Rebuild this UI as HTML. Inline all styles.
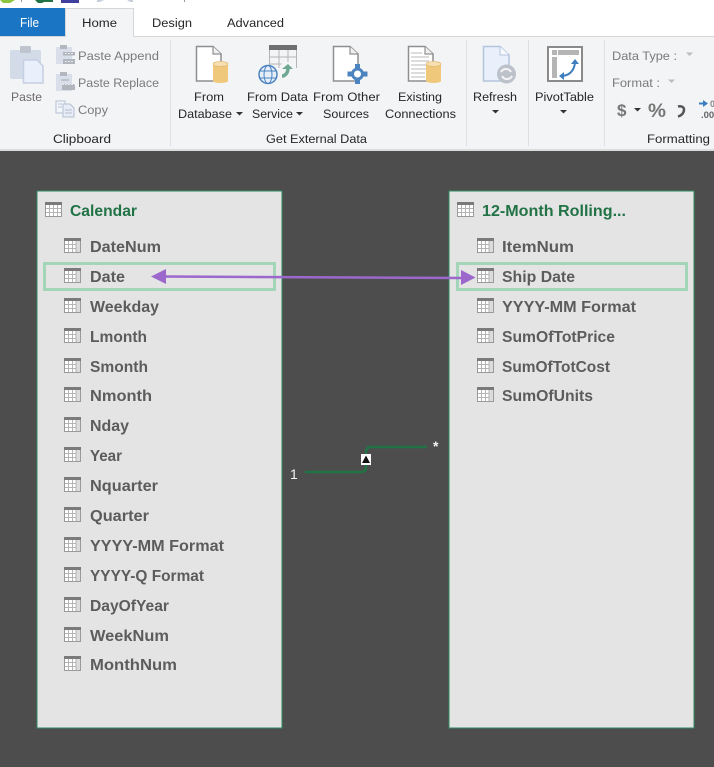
<!DOCTYPE html>
<html><head><meta charset="utf-8"><style>
html,body{margin:0;padding:0;width:714px;height:767px;overflow:hidden;background:#4d4d4d}
svg{display:block}
text{font-family:"Liberation Sans",sans-serif}
.r{font-size:12.3px;fill:#262626}
.g{font-size:12.3px;fill:#7a7a7a}
.f{font-size:15.5px;font-weight:bold;fill:#5c5c5c}
.h{font-size:15.5px;font-weight:bold;fill:#217346}
</style></head><body>
<svg width="714" height="767" viewBox="0 0 714 767" xmlns="http://www.w3.org/2000/svg">
<defs>
<g id="fi">
<rect x="0.500" y="0.500" width="16" height="14" fill="#fff" stroke="#9a9a9a" stroke-width="1"/>
<rect x="0" y="0" width="17" height="3" fill="#7a7a7a"/>
<rect x="12" y="3" width="4" height="11" fill="#dcdcdc"/>
<path d="M1 6.500h11M1 10.500h11M4.500 3v11M8.500 3v11M12 3v11" stroke="#b4b4b4" stroke-width="1" fill="none"/>
</g>
<g id="ti">
<rect x="0.500" y="0.500" width="16" height="14" fill="#fff" stroke="#9a9a9a" stroke-width="1"/>
<rect x="0" y="0" width="17" height="3" fill="#7a7a7a"/>
<path d="M1 6.500h15M1 10.500h15M4.500 3v11M8.500 3v11M12.500 3v11" stroke="#b4b4b4" stroke-width="1" fill="none"/>
</g>
<g id="doc">
<path d="M.5.5H17L25 8V35H.5Z" fill="#fff" stroke="#8f8f8f" stroke-width="1.5"/>
<path d="M17 .5V8H25" fill="#f0f0f0" stroke="#8f8f8f" stroke-width="1.2"/>
</g>
<g id="cyl">
<rect x="0" y="3" width="15" height="17" fill="#efc87c"/>
<ellipse cx="7.500" cy="20" rx="7.500" ry="2" fill="#efc87c"/>
<ellipse cx="7.500" cy="3" rx="7.500" ry="2.500" fill="#f6dfb0" stroke="#e2bb70" stroke-width=".7"/>
</g>
</defs>

<rect x="0" y="0" width="714" height="37" fill="#fff"/>
<rect x="0" y="37" width="714" height="113" fill="#f3f4f6"/>
<rect x="0" y="36" width="714" height="1" fill="#d6d6d6"/>
<rect x="0" y="149" width="714" height="2" fill="#dcdcdc"/>
<rect x="0" y="151" width="714" height="616" fill="#4d4d4d"/>

<!-- top strip -->
<path d="M0 0H15L10 3H3Z" fill="#8cc63f"/>
<rect x="21" y="0" width="1" height="2" fill="#999"/>
<path d="M35 0H53V2H44L42 3H38Z" fill="#217346"/>
<rect x="61" y="0" width="18" height="3" fill="#3f3f9f"/>
<path d="M97 0H104L100 2H97ZM127 0H133V2H130Z" fill="#c8cedb"/>
<rect x="184" y="0" width="1" height="2" fill="#999"/>

<!-- tabs -->
<rect x="0" y="8" width="65" height="28" fill="#1a75c4"/>
<text x="20" y="27" font-size="13" fill="#fff" textLength="19" lengthAdjust="spacingAndGlyphs">File</text>
<path d="M65.500 37V8.500H133.500V37" fill="#f3f4f6" stroke="#d6d6d6"/>
<rect x="66" y="35" width="67" height="3" fill="#f3f4f6"/>
<text x="82" y="27" class="r" textLength="35" lengthAdjust="spacingAndGlyphs">Home</text>
<text x="152" y="27" class="r" textLength="40" lengthAdjust="spacingAndGlyphs">Design</text>
<text x="227" y="27" class="r" textLength="57" lengthAdjust="spacingAndGlyphs">Advanced</text>

<!-- separators -->
<path d="M170.500 40V146M466.500 40V146M528.500 40V146M604.500 40V146" stroke="#dcdfe3" stroke-width="1"/>

<!-- paste -->
<rect x="10" y="50" width="31" height="29" rx="2" fill="#d3dbe9"/>
<rect x="20" y="46" width="11" height="7" rx="1" fill="#bfc5cf"/>
<path d="M23.500 60H37L43 66V83H23.500Z" fill="#eaf0fb" stroke="#c4cfe2" stroke-width="1.500"/>
<text x="11" y="101" class="g" textLength="31" lengthAdjust="spacingAndGlyphs" style="fill:#6f6a6a">Paste</text>
<!-- paste append -->
<rect x="56" y="47" width="16" height="17" fill="#d8deea"/>
<rect x="60" y="45" width="7" height="4" fill="#b2b7c0"/>
<rect x="63" y="52" width="12" height="3.500" fill="#b0b5be"/>
<rect x="63" y="59" width="12" height="5" fill="#b0b5be"/>
<path d="M65 53.500h8M65 61.500h8" stroke="#e8e8e8" stroke-dasharray="2 1"/>
<text x="78" y="60" class="g" textLength="81" lengthAdjust="spacingAndGlyphs">Paste Append</text>
<!-- paste replace -->
<rect x="56" y="74" width="16" height="17" fill="#d8deea"/>
<rect x="60" y="72" width="7" height="4" fill="#b2b7c0"/>
<rect x="62" y="84" width="13" height="6" fill="#b0b5be"/>
<path d="M62 84.500h13" stroke="#e8e8e8" stroke-dasharray="2 1"/>
<path d="M61 80h8" stroke="#a2a7b0"/>
<text x="78" y="87" class="g" textLength="81" lengthAdjust="spacingAndGlyphs">Paste Replace</text>
<!-- copy -->
<path d="M56 101H65V113H56Z" fill="#f3f6fb" stroke="#b4bfd2"/>
<path d="M63 104H70L74 108V117H63Z" fill="#e7edf7" stroke="#b4bfd2"/>
<path d="M65 110h7M65 113h7M58 104h4M58 107h4" stroke="#b4bfd2"/>
<text x="78" y="114" class="g" textLength="30" lengthAdjust="spacingAndGlyphs">Copy</text>
<text x="53" y="143" class="r" textLength="58" lengthAdjust="spacingAndGlyphs">Clipboard</text>

<!-- From Database -->
<use href="#doc" x="196" y="46"/>
<use href="#cyl" x="213" y="61"/>
<text x="194" y="101" class="r" textLength="30" lengthAdjust="spacingAndGlyphs">From</text>
<text x="178" y="118" class="r" textLength="54" lengthAdjust="spacingAndGlyphs">Database</text>
<path d="M236 112h7l-3.500 3.500Z" fill="#333"/>

<!-- From Data Service -->
<path d="M269.500 50V68M296.500 50V68M269.500 57h27M269.500 64h12M279 50v18M288 50v12" stroke="#b5b5b5" fill="none"/>
<rect x="269" y="45" width="28" height="5" fill="#6f6f6f"/>
<path d="M282 76c3 0 6-3 6-8" fill="none" stroke="#6ea893" stroke-width="3.500"/>
<path d="M282 69l6-5 5 5Z" fill="#6ea893"/>
<circle cx="268" cy="74.500" r="9" fill="#e6eef9" stroke="#4c84c0" stroke-width="1.500"/>
<ellipse cx="268" cy="74.500" rx="4" ry="9" fill="none" stroke="#4c84c0"/>
<path d="M259 71h18M259 78h18" stroke="#4c84c0"/>
<text x="247" y="101" class="r" textLength="61" lengthAdjust="spacingAndGlyphs">From Data</text>
<text x="252" y="118" class="r" textLength="41" lengthAdjust="spacingAndGlyphs">Service</text>
<path d="M296 112h7l-3.500 3.500Z" fill="#333"/>

<!-- From Other -->
<use href="#doc" x="333" y="46"/>
<circle cx="357.500" cy="74" r="5" fill="#fff" stroke="#4c84c0" stroke-width="3"/>
<path d="M355 64h5v4h-5ZM355 80h5v4h-5ZM347.500 71.500h4v5h-4ZM363.500 71.500h4v5h-4Z" fill="#4c84c0"/>
<text x="313" y="101" class="r" textLength="67" lengthAdjust="spacingAndGlyphs">From Other</text>
<text x="323" y="118" class="r" textLength="46" lengthAdjust="spacingAndGlyphs">Sources</text>

<!-- Existing -->
<use href="#doc" x="408" y="46"/>
<path d="M411 53h11M411 57h18M411 61h18M411 65h18M411 69h18M411 73h14M411 77h14" stroke="#b8b8b8"/>
<use href="#cyl" x="426" y="61"/>
<text x="398" y="101" class="r" textLength="44" lengthAdjust="spacingAndGlyphs">Existing</text>
<text x="385" y="118" class="r" textLength="71" lengthAdjust="spacingAndGlyphs">Connections</text>
<text x="266" y="143" class="r" textLength="101" lengthAdjust="spacingAndGlyphs">Get External Data</text>

<!-- Refresh -->
<path d="M483.500 46.500H500L509 55V81H483.500Z" fill="#e9f0fb" stroke="#b4c4dc" stroke-width="1.500"/>
<path d="M500 46.500V55H509" fill="#f5f8fd" stroke="#b4c4dc"/>
<circle cx="506.500" cy="74" r="9.500" fill="#bcc1ca"/>
<path d="M501 72c2-4 8-4 10 0M512 76c-2 4-8 4-10 0" fill="none" stroke="#f3f4f6" stroke-width="2"/>
<text x="473" y="101" class="r" textLength="44" lengthAdjust="spacingAndGlyphs">Refresh</text>
<path d="M492 110h7l-3.500 3.500Z" fill="#333"/>

<!-- PivotTable -->
<rect x="548" y="47" width="34" height="34" fill="#fff" stroke="#8a8a8a" stroke-width="2"/>
<rect x="552" y="50" width="5" height="5" fill="#b5b5b5"/>
<rect x="558" y="50" width="21" height="5" fill="#b5b5b5"/>
<rect x="552" y="57" width="5" height="21" fill="#b5b5b5"/>
<path d="M561 76c8 0 13-5 14-13" fill="none" stroke="#3d7fbe" stroke-width="2"/>
<path d="M571 64l4-5 4 5ZM564 72l-5 4 5 4Z" fill="#3d7fbe"/>
<text x="535" y="101" class="r" textLength="59" lengthAdjust="spacingAndGlyphs">PivotTable</text>
<path d="M560 110h7l-3.500 3.500Z" fill="#333"/>

<!-- Formatting -->
<text x="612" y="60" class="g" textLength="65" lengthAdjust="spacingAndGlyphs">Data Type :</text>
<path d="M686 52.500h7l-3.500 3.500Z" fill="#bdbdbd"/>
<text x="612" y="87" class="g" textLength="48" lengthAdjust="spacingAndGlyphs">Format :</text>
<path d="M668 79.500h7l-3.500 3.500Z" fill="#bdbdbd"/>
<text x="617" y="116" font-size="17" font-weight="bold" fill="#767676">$</text>
<path d="M634 108h7l-3.500 3.500Z" fill="#333"/>
<text x="648" y="117" font-size="19" font-weight="bold" fill="#767676" textLength="18" lengthAdjust="spacingAndGlyphs">%</text>
<path d="M678 106.500c4-1 6 1 6 3c0 3-2 6-6 7" fill="none" stroke="#555" stroke-width="2.500"/>
<path d="M699 103.500h5" stroke="#3d7fbe" stroke-width="2" fill="none"/>
<path d="M703 100l5 3.500-5 3.500Z" fill="#3d7fbe"/>
<text x="710" y="107" font-size="9" font-weight="bold" fill="#888">0</text>
<text x="701" y="118" font-size="9.500" font-weight="bold" fill="#666">.00</text>
<text x="647" y="143" class="r" textLength="63" lengthAdjust="spacingAndGlyphs">Formatting</text>

<!-- Left table -->
<rect x="37" y="191" width="245" height="537" fill="#e4e4e4" stroke="#2f8a62" stroke-width="1"/>
<use href="#ti" x="45" y="202"/>
<text x="70" y="216" class="h" textLength="67" lengthAdjust="spacingAndGlyphs">Calendar</text>
<use href="#fi" x="64" y="238"/><text x="90" y="252" class="f" textLength="71" lengthAdjust="spacingAndGlyphs">DateNum</text>
<use href="#fi" x="64" y="268"/><text x="90" y="282" class="f" textLength="35" lengthAdjust="spacingAndGlyphs">Date</text>
<use href="#fi" x="64" y="298"/><text x="90" y="312" class="f" textLength="69" lengthAdjust="spacingAndGlyphs">Weekday</text>
<use href="#fi" x="64" y="328"/><text x="90" y="342" class="f" textLength="57" lengthAdjust="spacingAndGlyphs">Lmonth</text>
<use href="#fi" x="64" y="358"/><text x="90" y="372" class="f" textLength="58" lengthAdjust="spacingAndGlyphs">Smonth</text>
<use href="#fi" x="64" y="387"/><text x="90" y="401" class="f" textLength="62" lengthAdjust="spacingAndGlyphs">Nmonth</text>
<use href="#fi" x="64" y="417"/><text x="90" y="431" class="f" textLength="39" lengthAdjust="spacingAndGlyphs">Nday</text>
<use href="#fi" x="64" y="447"/><text x="90" y="461" class="f" textLength="32" lengthAdjust="spacingAndGlyphs">Year</text>
<use href="#fi" x="64" y="477"/><text x="90" y="491" class="f" textLength="68" lengthAdjust="spacingAndGlyphs">Nquarter</text>
<use href="#fi" x="64" y="507"/><text x="90" y="521" class="f" textLength="59" lengthAdjust="spacingAndGlyphs">Quarter</text>
<use href="#fi" x="64" y="537"/><text x="90" y="551" class="f" textLength="134" lengthAdjust="spacingAndGlyphs">YYYY-MM Format</text>
<use href="#fi" x="64" y="567"/><text x="90" y="581" class="f" textLength="114" lengthAdjust="spacingAndGlyphs">YYYY-Q Format</text>
<use href="#fi" x="64" y="597"/><text x="90" y="611" class="f" textLength="79" lengthAdjust="spacingAndGlyphs">DayOfYear</text>
<use href="#fi" x="64" y="627"/><text x="90" y="641" class="f" textLength="79" lengthAdjust="spacingAndGlyphs">WeekNum</text>
<use href="#fi" x="64" y="656"/><text x="90" y="670" class="f" textLength="87" lengthAdjust="spacingAndGlyphs">MonthNum</text>

<!-- Right table -->
<rect x="449" y="191" width="245" height="537" fill="#e4e4e4" stroke="#2f8a62" stroke-width="1"/>
<use href="#ti" x="457" y="202"/>
<text x="482" y="216" class="h" textLength="144" lengthAdjust="spacingAndGlyphs">12-Month Rolling...</text>
<use href="#fi" x="477" y="238"/><text x="502" y="252" class="f" textLength="72" lengthAdjust="spacingAndGlyphs">ItemNum</text>
<use href="#fi" x="477" y="268"/><text x="502" y="282" class="f" textLength="73" lengthAdjust="spacingAndGlyphs">Ship Date</text>
<use href="#fi" x="477" y="298"/><text x="502" y="312" class="f" textLength="134" lengthAdjust="spacingAndGlyphs">YYYY-MM Format</text>
<use href="#fi" x="477" y="328"/><text x="502" y="342" class="f" textLength="113" lengthAdjust="spacingAndGlyphs">SumOfTotPrice</text>
<use href="#fi" x="477" y="358"/><text x="502" y="372" class="f" textLength="108" lengthAdjust="spacingAndGlyphs">SumOfTotCost</text>
<use href="#fi" x="477" y="387"/><text x="502" y="401" class="f" textLength="91" lengthAdjust="spacingAndGlyphs">SumOfUnits</text>

<!-- highlights -->
<rect x="44.500" y="263.500" width="230" height="26" fill="none" stroke="#a3d5b9" stroke-width="3"/>
<rect x="457.500" y="263.500" width="229" height="26" fill="none" stroke="#a3d5b9" stroke-width="3"/>

<!-- arrow -->
<path d="M164 276.500L462 278" stroke="#9c68cc" stroke-width="2.500" fill="none"/>
<path d="M151 276.500L166 269V284Z" fill="#9c68cc"/>
<path d="M475.500 277.500L461 270V285Z" fill="#9c68cc"/>

<!-- relationship -->
<path d="M305 472H361Q366 472 366 467V452Q366 447 371 447H427" fill="none" stroke="#217346" stroke-width="2.500"/>
<rect x="361" y="454" width="10" height="11" fill="#fff"/>
<path d="M366 455.500L370 463H362Z" fill="#111"/>
<text x="290" y="479" font-size="14" fill="#f2f2f2">1</text>
<text x="433" y="451" font-size="14" font-weight="bold" fill="#f2f2f2">*</text>
</svg>
</body></html>
